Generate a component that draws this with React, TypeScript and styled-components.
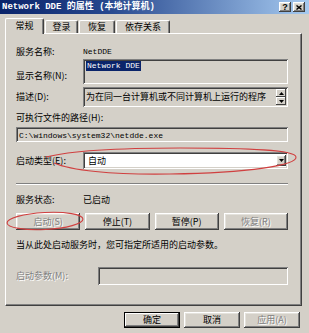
import React from "react";
import styled, { createGlobalStyle } from "styled-components";

const CJK = `"Noto Sans CJK SC", "Liberation Sans", sans-serif`;
const MONO = `"Liberation Mono", "Noto Sans CJK SC", monospace`;

const GlobalStyle = createGlobalStyle`
  html, body { margin: 0; padding: 0; background: #d4d0c8; }
  #root { width: 309px; height: 333px; }
`;

const raised = `box-shadow: inset -1px -1px #404040, inset 1px 1px #ffffff, inset -2px -2px #808080, inset 2px 2px #e4e2dc;`;
const sunken = `box-shadow: inset 1px 1px #808080, inset -1px -1px #ffffff, inset 2px 2px #404040, inset -2px -2px #d4d0c8;`;

const Window = styled.div`
  position: relative;
  width: 309px;
  height: 333px;
  box-sizing: border-box;
  background: #d4d0c8;
  display: flex;
  flex-direction: column;
  overflow: hidden;
  font-family: ${CJK};
  font-size: 9px;
  color: #000;
`;

const TitleBar = styled.div`
  flex: none;
  height: 14px;
  display: flex;
  align-items: center;
  gap: 2px;
  padding: 0 4px 0 2px;
  background: linear-gradient(to right, #0a246a 0%, #27488e 35%, #a6caf0 100%);
`;

const TitleText = styled.span`
  flex: 1;
  color: #fff;
  font-family: ${MONO};
  font-weight: bold;
  font-size: 9px;
  line-height: 14px;
  white-space: nowrap;
`;

const CaptionButton = styled.div`
  flex: none;
  width: 12px;
  height: 10px;
  background: #d4d0c8;
  ${raised}
  display: flex;
  align-items: center;
  justify-content: center;
  font-family: "Liberation Sans", sans-serif;
  font-weight: bold;
  font-size: 9px;
  line-height: 10px;
`;

const TabRow = styled.div`
  flex: none;
  display: flex;
  align-items: flex-end;
  height: 16px;
  margin: 4px 0 0 5px;
  position: relative;
  z-index: 1;
`;

const Tab = styled.div<{ $active?: boolean; $w: number }>`
  width: ${(p) => p.$w}px;
  height: ${(p) => (p.$active ? 16 : 13)}px;
  margin-left: ${(p) => (p.$active ? 0 : 1)}px;
  margin-bottom: ${(p) => (p.$active ? 0 : 1)}px;
  box-sizing: border-box;
  background: #d4d0c8;
  border-top: 1px solid #fff;
  border-left: 1px solid #fff;
  border-right: 1px solid #404040;
  box-shadow: inset -1px 0 #808080;
  border-radius: 2px 2px 0 0;
  display: flex;
  align-items: ${(p) => (p.$active ? "flex-start" : "center")};
  padding-top: ${(p) => (p.$active ? 1 : 0)}px;
  justify-content: center;
  font-size: 9px;
  line-height: 12px;
  white-space: nowrap;
`;

const Panel = styled.div`
  flex: none;
  position: relative;
  margin: -1px 7px 0 5px;
  height: 273px;
  box-sizing: border-box;
  border-top: 1px solid #fff;
  border-left: 1px solid #fff;
  border-right: 1px solid #404040;
  border-bottom: 1px solid #404040;
  box-shadow: inset -1px -1px #808080;
  padding: 12px 13px 0 10px;
  display: flex;
  flex-direction: column;
`;

const FieldRow = styled.div<{ $mt?: number; $h: number; $col?: number }>`
  display: grid;
  grid-template-columns: ${(p) => p.$col ?? 67}px 1fr;
  height: ${(p) => p.$h}px;
  margin-top: ${(p) => p.$mt ?? 0}px;
  align-items: center;
`;

const Label = styled.span<{ $disabled?: boolean; $shift?: number }>`
  font-size: 9px;
  line-height: 12px;
  white-space: nowrap;
  color: ${(p) => (p.$disabled ? "#808080" : "#000")};
  text-shadow: ${(p) => (p.$disabled ? "1px 1px #fff" : "none")};
  transform: translateY(${(p) => p.$shift ?? 0}px);
`;

const Mono = styled.span`
  font-family: ${MONO};
  font-size: 8px;
  line-height: 10px;
  white-space: nowrap;
`;

const Selected = styled(Mono)`
  background: #0a246a;
  color: #fff;
  padding: 0 1px;
`;

const TextBox = styled.div<{ $bg?: string; $align?: string }>`
  height: 100%;
  box-sizing: border-box;
  background: ${(p) => p.$bg ?? "#d4d0c8"};
  ${sunken}
  display: flex;
  align-items: ${(p) => p.$align ?? "center"};
  padding: 2px 2px 2px 3px;
  overflow: hidden;
  position: relative;
`;

const BoxText = styled.span`
  flex: 1;
  font-size: 9px;
  line-height: 12px;
  white-space: nowrap;
  overflow: hidden;
`;

const Spinner = styled.div`
  flex: none;
  display: flex;
  flex-direction: column;
  gap: 0;
  width: 10px;
  height: 16px;
`;

const SpinButton = styled.div`
  flex: 1;
  background: #d4d0c8;
  box-shadow: inset -1px -1px #404040, inset 1px 1px #fff;
  display: flex;
  align-items: center;
  justify-content: center;
`;

const FullLabel = styled.div<{ $mt?: number; $disabled?: boolean }>`
  height: 12px;
  margin-top: ${(p) => p.$mt ?? 0}px;
  font-size: 9px;
  line-height: 12px;
  white-space: nowrap;
  color: ${(p) => (p.$disabled ? "#808080" : "#000")};
`;

const PathBox = styled.div<{ $mt?: number }>`
  height: 15px;
  margin-top: ${(p) => p.$mt ?? 0}px;
  box-sizing: border-box;
  background: #d4d0c8;
  ${sunken}
  display: flex;
  align-items: center;
  padding: 2px 3px 0 3px;
`;

const Combo = styled.div`
  height: 100%;
  box-sizing: border-box;
  background: #fff;
  ${sunken}
  display: flex;
  align-items: center;
  padding: 2px 2px 2px 5px;
`;

const DropButton = styled.div`
  flex: none;
  width: 10px;
  height: 11px;
  background: #d4d0c8;
  ${raised}
  display: flex;
  align-items: center;
  justify-content: center;
`;

const Separator = styled.div<{ $mt?: number }>`
  height: 2px;
  margin-top: ${(p) => p.$mt ?? 0}px;
  box-sizing: border-box;
  border-top: 1px solid #808080;
  border-bottom: 1px solid #fff;
`;

const ButtonRow = styled.div<{ $mt?: number }>`
  display: grid;
  grid-template-columns: repeat(4, 1fr);
  gap: 5px;
  height: 17px;
  margin-top: ${(p) => p.$mt ?? 0}px;
`;

const Button = styled.div<{ $disabled?: boolean; $default?: boolean; $w?: number }>`
  box-sizing: border-box;
  height: 100%;
  width: ${(p) => (p.$w ? `${p.$w}px` : "auto")};
  background: #d4d0c8;
  box-shadow: ${(p) =>
    p.$default
      ? "inset 0 0 0 1px #000, inset -2px -2px #404040, inset 2px 2px #fff, inset -3px -3px #808080"
      : "inset -1px -1px #404040, inset 1px 1px #fff, inset -2px -2px #808080, inset 2px 2px #e4e2dc"};
  display: flex;
  align-items: center;
  justify-content: center;
  font-size: 9px;
  line-height: 12px;
  white-space: nowrap;
  color: ${(p) => (p.$disabled ? "#808080" : "#000")};
  text-shadow: ${(p) => (p.$disabled ? "1px 1px #fff" : "none")};
`;

const Footer = styled.div`
  flex: none;
  display: flex;
  justify-content: flex-end;
  gap: 4px;
  height: 16px;
  margin-top: 6px;
  padding-right: 9px;
`;

const Annotation = styled.svg`
  position: absolute;
  left: 0;
  top: 0;
  width: 309px;
  height: 333px;
  pointer-events: none;
  z-index: 5;
`;

const Arrow = ({ up }: { up?: boolean }) => (
  <svg width="5" height="3" viewBox="0 0 5 3">
    <path d={up ? "M2.5 0 L5 3 L0 3 Z" : "M0 0 L5 0 L2.5 3 Z"} fill="#000" />
  </svg>
);

export default function App() {
  return (
    <>
      <GlobalStyle />
      <Window>
        <TitleBar>
          <TitleText>Network DDE 的属性 (本地计算机)</TitleText>
          <CaptionButton>?</CaptionButton>
          <CaptionButton>
            <svg width="6" height="5" viewBox="0 0 6 5">
              <path d="M0.5 0.5 L5.5 4.5 M5.5 0.5 L0.5 4.5" stroke="#000" strokeWidth="1.4" />
            </svg>
          </CaptionButton>
        </TitleBar>

        <TabRow>
          <Tab $active $w={39}>常规</Tab>
          <Tab $w={33}>登录</Tab>
          <Tab $w={36}>恢复</Tab>
          <Tab $w={54}>依存关系</Tab>
        </TabRow>

        <Panel>
          <FieldRow $h={12}>
            <Label>服务名称:</Label>
            <Mono>NetDDE</Mono>
          </FieldRow>

          <FieldRow $h={25} $mt={1}>
            <Label $shift={4}>显示名称(N):</Label>
            <TextBox $align="flex-start">
              <Selected>Network DDE</Selected>
            </TextBox>
          </FieldRow>

          <FieldRow $h={20} $mt={3}>
            <Label>描述(D):</Label>
            <TextBox>
              <BoxText>为在同一台计算机或不同计算机上运行的程序</BoxText>
              <Spinner>
                <SpinButton><Arrow up /></SpinButton>
                <SpinButton><Arrow /></SpinButton>
              </Spinner>
            </TextBox>
          </FieldRow>

          <FullLabel $mt={5}>可执行文件的路径(H):</FullLabel>
          <PathBox $mt={3}>
            <Mono>C:\windows\system32\netdde.exe</Mono>
          </PathBox>

          <FieldRow $h={17} $mt={10}>
            <Label>启动类型(E):</Label>
            <Combo>
              <BoxText>自动</BoxText>
              <DropButton><Arrow /></DropButton>
            </Combo>
          </FieldRow>

          <Separator $mt={14} />

          <FieldRow $h={12} $mt={9}>
            <Label>服务状态:</Label>
            <Label>已启动</Label>
          </FieldRow>

          <ButtonRow $mt={7}>
            <Button $disabled>启动(S)</Button>
            <Button>停止(T)</Button>
            <Button>暂停(P)</Button>
            <Button $disabled>恢复(R)</Button>
          </ButtonRow>

          <FullLabel $mt={9}>当从此处启动服务时，您可指定所适用的启动参数。</FullLabel>

          <FieldRow $h={18} $mt={16} $col={82}>
            <Label $disabled>启动参数(M):</Label>
            <TextBox />
          </FieldRow>
        </Panel>

        <Footer>
          <Button $default $w={56}>确定</Button>
          <Button $w={56}>取消</Button>
          <Button $disabled $w={56}>应用(A)</Button>
        </Footer>

        <Annotation viewBox="0 0 309 333">
          <path
            d="M46 157 C70 151 120 148 180 148 C250 148 295 150 296 157 C297 165 250 173 170 174 C110 175 70 170 54 163"
            fill="none"
            stroke="#d04040"
            strokeWidth="1.1"
          />
          <ellipse
            cx="45"
            cy="221"
            rx="38"
            ry="8.5"
            transform="rotate(-3 45 221)"
            fill="none"
            stroke="#d04040"
            strokeWidth="1.1"
          />
        </Annotation>
      </Window>
    </>
  );
}
